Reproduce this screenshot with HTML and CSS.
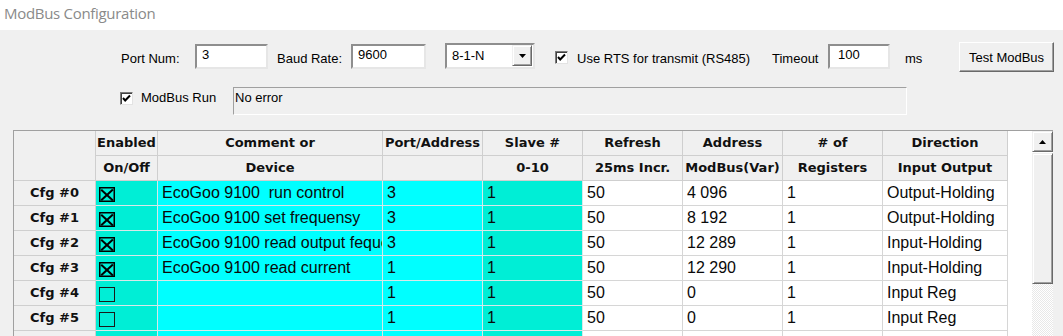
FILE: index.html
```html
<!DOCTYPE html>
<html>
<head>
<meta charset="utf-8">
<title>ModBus Configuration</title>
<link rel="stylesheet" href="styles.css">
</head>
<body>
<div class="title">ModBus Configuration</div>
<div class="panel">
  <div class="row1">
    <span class="lbl lbl-port">Port Num:</span>
    <div class="field field-port">3</div>
    <span class="lbl lbl-baud">Baud Rate:</span>
    <div class="field field-baud">9600</div>
    <div class="combo">
      <span class="combo-text">8-1-N</span>
      <span class="combo-btn"><svg width="7" height="4" viewBox="0 0 7 4"><polygon points="0,0 7,0 3.5,4" fill="#000"/></svg></span>
    </div>
    <span class="chk chk-rts"><svg width="11" height="11" viewBox="0 0 11 11"><polyline points="2,5 4.2,7.5 9,2.5" fill="none" stroke="#000" stroke-width="2"/></svg></span>
    <span class="lbl lbl-rts">Use RTS for transmit (RS485)</span>
    <span class="lbl lbl-timeout">Timeout</span>
    <div class="field field-timeout">100</div>
    <span class="lbl lbl-ms">ms</span>
    <div class="button">Test ModBus</div>
  </div>
  <div class="row2">
    <span class="chk chk-run"><svg width="11" height="11" viewBox="0 0 11 11"><polyline points="2,5 4.2,7.5 9,2.5" fill="none" stroke="#000" stroke-width="2"/></svg></span>
    <span class="lbl lbl-run">ModBus Run</span>
    <div class="status">No error</div>
  </div>
  <div class="gridwrap">
    <div class="grid">
      <div class="hd corner"></div>
      <div class="hd">Enabled</div>
      <div class="hd">Comment or</div>
      <div class="hd">Port/Address</div>
      <div class="hd">Slave #</div>
      <div class="hd">Refresh</div>
      <div class="hd">Address</div>
      <div class="hd"># of</div>
      <div class="hd">Direction</div>

      <div class="hd">On/Off</div>
      <div class="hd">Device</div>
      <div class="hd"></div>
      <div class="hd">0-10</div>
      <div class="hd">25ms Incr.</div>
      <div class="hd">ModBus(Var)</div>
      <div class="hd">Registers</div>
      <div class="hd">Input Output</div>

      <div class="rh">Cfg #0</div>
      <div class="cell en"><span class="xbox on"></span></div>
      <div class="cell cy">EcoGoo 9100  run control</div>
      <div class="cell cy">3</div>
      <div class="cell en">1</div>
      <div class="cell">50</div>
      <div class="cell">4 096</div>
      <div class="cell">1</div>
      <div class="cell">Output-Holding</div>

      <div class="rh">Cfg #1</div>
      <div class="cell en"><span class="xbox on"></span></div>
      <div class="cell cy">EcoGoo 9100 set frequensy</div>
      <div class="cell cy">3</div>
      <div class="cell en">1</div>
      <div class="cell">50</div>
      <div class="cell">8 192</div>
      <div class="cell">1</div>
      <div class="cell">Output-Holding</div>

      <div class="rh">Cfg #2</div>
      <div class="cell en"><span class="xbox on"></span></div>
      <div class="cell cy">EcoGoo 9100 read output fequency</div>
      <div class="cell cy">3</div>
      <div class="cell en">1</div>
      <div class="cell">50</div>
      <div class="cell">12 289</div>
      <div class="cell">1</div>
      <div class="cell">Input-Holding</div>

      <div class="rh">Cfg #3</div>
      <div class="cell en"><span class="xbox on"></span></div>
      <div class="cell cy">EcoGoo 9100 read current</div>
      <div class="cell cy">1</div>
      <div class="cell en">1</div>
      <div class="cell">50</div>
      <div class="cell">12 290</div>
      <div class="cell">1</div>
      <div class="cell">Input-Holding</div>

      <div class="rh">Cfg #4</div>
      <div class="cell en"><span class="xbox"></span></div>
      <div class="cell cy"></div>
      <div class="cell cy">1</div>
      <div class="cell en">1</div>
      <div class="cell">50</div>
      <div class="cell">0</div>
      <div class="cell">1</div>
      <div class="cell">Input Reg</div>

      <div class="rh">Cfg #5</div>
      <div class="cell en"><span class="xbox"></span></div>
      <div class="cell cy"></div>
      <div class="cell cy">1</div>
      <div class="cell en">1</div>
      <div class="cell">50</div>
      <div class="cell">0</div>
      <div class="cell">1</div>
      <div class="cell">Input Reg</div>

      <div class="rh"></div>
      <div class="cell en"></div>
      <div class="cell cy"></div>
      <div class="cell cy"></div>
      <div class="cell en"></div>
      <div class="cell"></div>
      <div class="cell"></div>
      <div class="cell"></div>
      <div class="cell"></div>
    </div>
    <div class="grid-fill"></div>
    <div class="vscroll">
      <div class="sb-btn"><svg width="7" height="4" viewBox="0 0 7 4"><polygon points="3.5,0 7,4 0,4" fill="#000"/></svg></div>
      <div class="sb-thumb"></div>
      <div class="sb-track"></div>
    </div>
  </div>
</div>
</body>
</html>
```
FILE: styles.css
```css
* { box-sizing: border-box; }
html, body { margin: 0; padding: 0; }
body {
  width: 1063px;
  height: 336px;
  overflow: hidden;
  background: #f0f0f0;
  font-family: "Liberation Sans", Arial, sans-serif;
  font-size: 13px;
  color: #000;
}
.title {
  height: 30px;
  background: #fff;
  padding: 3px 0 0 4px;
  font-family: "Open Sans", sans-serif;
  font-size: 15px;
  letter-spacing: -0.3px;
  line-height: 20px;
  color: #8a8a8a;
}
.panel { background: #f0f0f0; }

.row1 {
  display: flex;
  align-items: flex-start;
  height: 30px;
  margin-top: 12px;
  padding-left: 121px;
}
.lbl { display: inline-block; white-space: nowrap; line-height: 15px; flex: none; }
.row1 .lbl { margin-top: 9px; }
.lbl-port { width: 74px; }
.lbl-baud { width: 74px; margin-left: 9px; }
.lbl-rts { width: 195px; margin-left: 9px; }
.lbl-timeout { width: 56px; }
.lbl-ms { width: 54px; margin-left: 15px; }

.field {
  flex: none;
  height: 25px;
  margin-top: 2px;
  background: #fff;
  border: 2px solid;
  border-color: #8e8e8e #e6e6e6 #e6e6e6 #8e8e8e;
  padding: 1px 0 0 5px;
  line-height: 15px;
}
.field-port { width: 73px; }
.field-baud { width: 75px; }
.field-timeout { width: 62px; padding-left: 8px; }

.combo {
  flex: none;
  display: flex;
  align-items: flex-start;
  width: 90px;
  height: 26px;
  margin-top: 1px;
  margin-left: 19px;
  background: #fff;
  border: 2px solid;
  border-color: #8e8e8e #e6e6e6 #e6e6e6 #8e8e8e;
}
.combo-text { padding: 3px 0 0 5px; line-height: 15px; }
.combo-btn {
  margin-left: auto;
  margin-right: 1px;
  width: 20px;
  height: 21px;
  background: #f0f0f0;
  border: 1px solid;
  border-color: #f0f0f0 #696969 #696969 #f0f0f0;
  box-shadow: inset 1px 1px 0 #fff, inset -1px -1px 0 #a0a0a0;
  display: flex;
  align-items: center;
  justify-content: center;
}

.chk {
  flex: none;
  width: 13px;
  height: 13px;
  background: #fff;
  border: 1px solid;
  border-color: #7a7a7a #e3e3e3 #e3e3e3 #7a7a7a;
  box-shadow: inset 1px 1px 0 #404040;
  display: flex;
  align-items: center;
  justify-content: center;
}
.chk-rts { margin-top: 9px; margin-left: 20px; }

.button {
  flex: none;
  width: 95px;
  height: 30px;
  background: #f0f0f0;
  border: 1px solid;
  border-color: #fff #696969 #696969 #fff;
  box-shadow: inset -1px -1px 0 #a0a0a0;
  display: flex;
  align-items: center;
  justify-content: center;
  line-height: 15px;
}

.row2 {
  display: flex;
  align-items: flex-start;
  height: 28px;
  margin-top: 15px;
  padding-left: 120px;
}
.chk-run { margin-top: 5px; }
.lbl-run { width: 92px; margin-left: 8px; margin-top: 3px; }
.status {
  flex: none;
  width: 674px;
  height: 28px;
  border: 1px solid;
  border-color: #a0a0a0 #fff #fff #a0a0a0;
  padding: 2px 2px 0 1px;
  line-height: 15px;
}

.gridwrap {
  display: flex;
  margin-top: 15px;
  margin-left: 13px;
  width: 1040px;
  height: 206px;
  overflow: hidden;
  background: #fff;
  border-top: 1px solid #a0a0a0;
  border-left: 1px solid #a0a0a0;
}
.grid {
  flex: none;
  display: grid;
  grid-template-columns: 82px 62px 225px 100px 100px 100px 100px 100px 125px;
  grid-auto-rows: 25px;
  width: 994px;
  align-content: start;
}
.grid > div {
  border-right: 1px solid #d6d6d6;
  border-bottom: 1px solid #d6d6d6;
  overflow: hidden;
  white-space: pre;
}
.hd {
  background: #f0f0f0;
  font-family: "DejaVu Sans", sans-serif;
  font-weight: bold;
  font-size: 13px;
  line-height: 24px;
  text-align: center;
  color: #111;
}
.grid > .hd { border-color: #cfcfcf; }
.corner { grid-row: span 2; }
.rh {
  background: #f0f0f0;
  font-family: "DejaVu Sans", sans-serif;
  font-weight: bold;
  font-size: 13px;
  line-height: 24px;
  text-align: center;
  color: #111;
}
.grid > .rh { border-color: #cfcfcf; }
.cell {
  font-family: "Liberation Sans", Arial, sans-serif;
  font-size: 16px;
  line-height: 24px;
  padding-left: 4px;
  color: #0a0a0a;
}
.en { background: #00eed6; }
.cy { background: #00ffff; }
.grid > .cell.en, .grid > .cell.cy { border-color: #d8e8e8; }

.xbox {
  display: block;
  width: 16px;
  height: 15px;
  margin: 6px 0 0 -1px;
  border: 1px solid #1a1a1a;
  position: relative;
}
.xbox.on { border-color: #000; box-shadow: inset 0 0 0 0.5px #000; }
.xbox.on::before,
.xbox.on::after {
  content: "";
  position: absolute;
  left: 5.8px;
  top: -1.5px;
  width: 2.4px;
  height: 16px;
  background: #000;
}
.xbox.on::before { transform: rotate(47deg); }
.xbox.on::after { transform: rotate(-47deg); }

.grid-fill { flex: none; width: 24px; }

.vscroll {
  flex: none;
  width: 21px;
  display: flex;
  flex-direction: column;
}
.sb-btn, .sb-thumb {
  flex: none;
  background: #f0f0f0;
  border: 1px solid;
  border-color: #f0f0f0 #696969 #696969 #f0f0f0;
  box-shadow: inset 1px 1px 0 #fff, inset -1px -1px 0 #a0a0a0;
}
.sb-btn {
  height: 21px;
  display: flex;
  align-items: center;
  justify-content: center;
}
.sb-thumb { height: 131px; margin-top: 1px; }
.sb-track {
  flex: 1;
  background-image: repeating-conic-gradient(#ffffff 0 25%, #e8e8e8 0 50%);
  background-size: 2px 2px;
}
```
